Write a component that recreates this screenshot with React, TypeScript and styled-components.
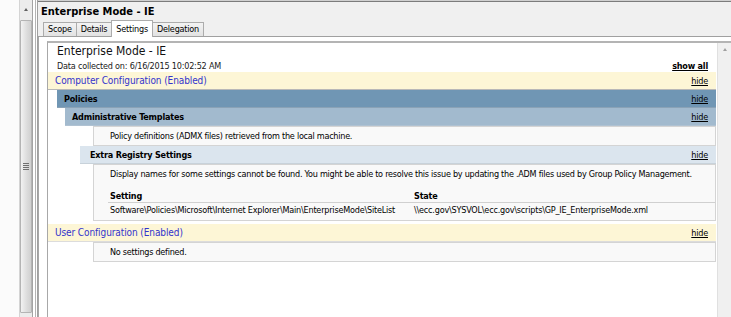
import React from 'react';
import styled, { createGlobalStyle } from 'styled-components';

const FONT = `"DejaVu Sans Condensed", "Liberation Sans", Arial, sans-serif`;

const GlobalStyle = createGlobalStyle`
  html, body { margin: 0; padding: 0; background: #fff; }
  body { font-family: ${FONT}; font-size: 9px; letter-spacing: -0.2px; color: #000; }
  #root { width: 731px; height: 317px; overflow: hidden; }
`;

const Frame = styled.div`
  display: flex;
  width: 731px;
  height: 317px;
  overflow: hidden;
`;

const LeftPane = styled.div`
  flex: none;
  width: 19px;
  background: #fbfbfb;
`;

const NavScroll = styled.div`
  flex: none;
  width: 12px;
  background: #ececec;
  border-left: 1px solid #d4d4d4;
  border-right: 1px solid #a4a4a4;
  display: flex;
  flex-direction: column;
  align-items: stretch;
`;

const ArrowBox = styled.div`
  flex: none;
  height: 19px;
  display: flex;
  justify-content: center;
  padding-top: 8px;
  box-sizing: border-box;
`;

const UpArrow = styled.div`
  width: 0;
  height: 0;
  border-left: 2.5px solid transparent;
  border-right: 2.5px solid transparent;
  border-bottom: 3px solid #606060;
`;

const Thumb = styled.div`
  flex: 1;
  margin: 1px 0 4px;
  border: 1px solid #b4b4b4;
  border-radius: 1px;
  background: linear-gradient(to right, #f2f2f2, #dcdcdc 60%, #d0d0d0);
  display: flex;
  align-items: center;
  justify-content: center;
`;

const Grip = styled.div`
  width: 6px;
  height: 7px;
  background: repeating-linear-gradient(to bottom, #707070 0 1px, transparent 1px 2px);
`;

const Splitter = styled.div`
  flex: none;
  width: 4px;
  border-right: 1px solid #a0a0a0;
  background: linear-gradient(to right, #fff 0 2px, #b4b4b4 2px 3px, #fff 3px);
`;

const RightPanel = styled.div`
  flex: 1;
  display: flex;
  flex-direction: column;
  min-width: 0;
`;

const Header = styled.div`
  flex: none;
  background: #f0f0f0;
  border-top: 1px solid #d0d0d0;
  box-shadow: inset 0 1px 0 #7c7c7c;
`;

const PanelTitle = styled.div`
  height: 19px;
  padding: 3px 0 0 3px;
  box-sizing: border-box;
  font-weight: bold;
  font-size: 11px;
  letter-spacing: 0;
  line-height: 15px;
`;

const Tabs = styled.div`
  display: flex;
  align-items: flex-end;
  height: 16px;
  padding-left: 5px;
  border-bottom: 1px solid #a0a0a0;
`;

const Tab = styled.div<{ $active?: boolean }>`
  height: ${(p) => (p.$active ? 17 : 14)}px;
  margin-bottom: ${(p) => (p.$active ? -1 : 0)}px;
  margin-right: -1px;
  padding: ${(p) => (p.$active ? '2px 4px 0' : '0 4px')};
  box-sizing: border-box;
  border: 1px solid #acacac;
  border-bottom: none;
  background: ${(p) => (p.$active ? '#fff' : 'linear-gradient(#f3f3f3, #e2e2e2)')};
  line-height: 12px;
  position: relative;
  z-index: ${(p) => (p.$active ? 1 : 0)};
`;

const TabPage = styled.div`
  flex: 1;
  display: flex;
  background: #fff;
  border-left: 1px solid #a8a8a8;
  padding: 4px 0 0 8px;
  min-height: 0;
`;

const Browser = styled.div`
  flex: 1;
  display: flex;
  border-top: 2px solid #b4b4b4;
  border-left: 1px solid #a8a8a8;
  min-width: 0;
`;

const Content = styled.div`
  flex: 1;
  padding-right: 1px;
  background: #fff;
  min-width: 0;
`;

const VScroll = styled.div`
  flex: none;
  width: 13px;
  background: #f0f0f0;
  border-left: 1px solid #e0e0e0;
  display: flex;
  justify-content: center;
  padding-top: 5px;
`;

const SmallUp = styled.div`
  width: 0;
  height: 0;
  border-left: 2.5px solid transparent;
  border-right: 2.5px solid transparent;
  border-bottom: 3px solid #a0a0a0;
`;

const ReportTitle = styled.div`
  margin: 1px 0 0 9px;
  font-size: 12px;
  letter-spacing: 0;
  line-height: 15px;
  color: #111;
`;

const InfoRow = styled.div`
  display: flex;
  justify-content: space-between;
  margin-top: 2px;
  padding: 0 8px 0 9px;
  height: 11px;
  line-height: 11px;
  color: #202020;
`;

const Link = styled.span<{ $bold?: boolean }>`
  text-decoration: underline;
  font-size: 9px;
  letter-spacing: -0.2px;
  font-weight: ${(p) => (p.$bold ? 'bold' : 'normal')};
  color: #000;
`;

const Section = styled.div<{ $gap?: number }>`
  margin-top: ${(p) => p.$gap ?? 0}px;
`;

const Bar = styled.div<{ $indent: number; $bg: string; $border: string; $pad: number; $color?: string; $bold?: boolean }>`
  display: flex;
  justify-content: space-between;
  align-items: center;
  margin-left: ${(p) => p.$indent}px;
  height: 17px;
  padding: 0 8px 0 ${(p) => p.$pad}px;
  background: ${(p) => p.$bg};
  border-bottom: 1px solid ${(p) => p.$border};
  color: ${(p) => p.$color ?? '#000'};
  font-weight: ${(p) => (p.$bold ? 'bold' : 'normal')};
  line-height: 12px;
`;

const ConfigLabel = styled.span`
  font-size: 10px;
  letter-spacing: -0.1px;
`;

const InfoBox = styled.div`
  margin-left: 45px;
  background: #f9f9f9;
  border: 1px solid #d4d4d4;
  padding: 3px 0 3px 16px;
  line-height: 12px;
  white-space: nowrap;
  letter-spacing: -0.25px;
`;

const Table = styled.div`
  display: grid;
  grid-template-columns: 304px 1fr;
  margin: 10px 0 1px -2px;
  letter-spacing: -0.2px;
`;

const HeadCell = styled.div`
  font-weight: bold;
  line-height: 12px;
  padding-left: 2px;
  border-bottom: 1px solid #d0d0d0;
`;

const Cell = styled.div`
  line-height: 12px;
  padding: 1px 0 0 2px;
`;

export default function App() {
  return (
    <>
      <GlobalStyle />
      <Frame>
        <LeftPane />
        <NavScroll>
          <ArrowBox>
            <UpArrow />
          </ArrowBox>
          <Thumb>
            <Grip />
          </Thumb>
        </NavScroll>
        <Splitter />
        <RightPanel>
          <Header>
            <PanelTitle>Enterprise Mode - IE</PanelTitle>
            <Tabs>
              <Tab>Scope</Tab>
              <Tab>Details</Tab>
              <Tab $active>Settings</Tab>
              <Tab>Delegation</Tab>
            </Tabs>
          </Header>
          <TabPage>
            <Browser>
              <Content>
                <ReportTitle>Enterprise Mode - IE</ReportTitle>
                <InfoRow>
                  <span>Data collected on: 6/16/2015 10:02:52 AM</span>
                  <Link $bold>show all</Link>
                </InfoRow>
                <Section>
                  <Bar $indent={0} $pad={7} $bg="#fdf6d6" $border="#b8b8b8" $color="#3333cc">
                    <ConfigLabel>Computer Configuration (Enabled)</ConfigLabel>
                    <Link>hide</Link>
                  </Bar>
                  <Bar $indent={9} $pad={7} $bg="#7096b4" $border="#8aa2b6" $bold>
                    <span>Policies</span>
                    <Link>hide</Link>
                  </Bar>
                  <Bar $indent={17} $pad={7} $bg="#a2bace" $border="#b0c2d2" $bold>
                    <span>Administrative Templates</span>
                    <Link>hide</Link>
                  </Bar>
                  <InfoBox>Policy definitions (ADMX files) retrieved from the local machine.</InfoBox>
                  <Bar $indent={32} $pad={10} $bg="#dbe5ee" $border="#c8d2da" $bold>
                    <span>Extra Registry Settings</span>
                    <Link>hide</Link>
                  </Bar>
                  <InfoBox>
                    Display names for some settings cannot be found. You might be able to resolve this issue by
                    updating the .ADM files used by Group Policy Management.
                    <Table>
                      <HeadCell>Setting</HeadCell>
                      <HeadCell>State</HeadCell>
                      <Cell>Software\Policies\Microsoft\Internet Explorer\Main\EnterpriseMode\SiteList</Cell>
                      <Cell>\\ecc.gov\SYSVOL\ecc.gov\scripts\GP_IE_EnterpriseMode.xml</Cell>
                    </Table>
                  </InfoBox>
                </Section>
                <Section $gap={3}>
                  <Bar $indent={0} $pad={7} $bg="#fdf6d6" $border="#dcdcdc" $color="#3333cc">
                    <ConfigLabel>User Configuration (Enabled)</ConfigLabel>
                    <Link>hide</Link>
                  </Bar>
                  <InfoBox>No settings defined.</InfoBox>
                </Section>
              </Content>
              <VScroll>
                <SmallUp />
              </VScroll>
            </Browser>
          </TabPage>
        </RightPanel>
      </Frame>
    </>
  );
}
